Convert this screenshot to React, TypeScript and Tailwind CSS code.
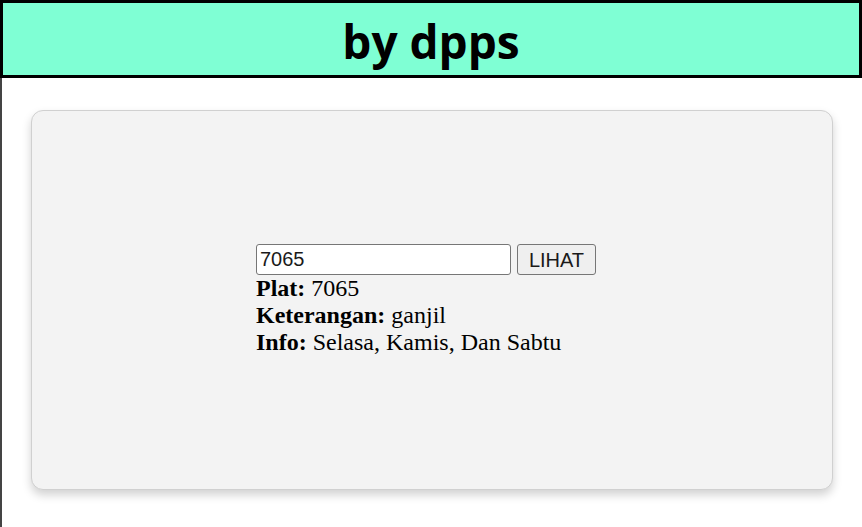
import React, { useState } from 'react';

type IInfo = {
    plat: string;
    keterangan: string;
    info: string;
};

const cekPlat = (plat: string): IInfo => {
    const last = parseInt(plat.slice(-1), 10);
    const ganjil = last % 2 === 1;
    return {
        plat,
        keterangan: ganjil ? 'ganjil' : 'genap',
        info: ganjil ? 'Selasa, Kamis, Dan Sabtu' : 'Senin, Rabu, Dan Jumat',
    };
};

function App() {
    const [query, setQuery] = useState('7065');
    const [hasil, setHasil] = useState<IInfo>(cekPlat('7065'));

    return (
        <div className="flex min-h-screen flex-col bg-white">
            <div className="flex h-[78px] items-center justify-center border-[3px] border-black bg-[#7fffd4] pt-[3px]">
                <h1
                    className="text-[46px] font-bold leading-none text-black"
                    style={{ fontFamily: '"Open Sans", sans-serif' }}
                >
                    by dpps
                </h1>
            </div>
            <div className="flex-1 border-l-2 border-[#444] pb-[37px] pl-[29px] pr-[29px] pt-8">
                <div className="flex h-[380px] items-center justify-center rounded-xl border border-[#d0d0d0] bg-[#f3f3f3] shadow-[0_5px_10px_rgba(0,0,0,0.18)]">
                    <div className="w-[352px]">
                        <div className="flex gap-[6px] font-['Liberation_Sans',sans-serif] text-[20px]">
                            <input
                                className="h-[31px] w-[255px] rounded-[3px] border border-[#767676] bg-white px-[3px] text-[#1a1a1a] outline-none"
                                value={query}
                                onChange={(e) => setQuery(e.target.value)}
                                type="text"
                            />
                            <button
                                className="h-[31px] w-[79px] rounded-[3px] border border-[#767676] bg-[#efefef] text-[#1a1a1a]"
                                onClick={() => setHasil(cekPlat(query))}
                            >
                                LIHAT
                            </button>
                        </div>
                        <div className="font-['Liberation_Serif',serif] text-[24px] leading-[27px] text-black">
                            <div>
                                <b>Plat:</b> {hasil.plat}
                            </div>
                            <div>
                                <b>Keterangan:</b> {hasil.keterangan}
                            </div>
                            <div>
                                <b>Info:</b> {hasil.info}
                            </div>
                        </div>
                    </div>
                </div>
            </div>
        </div>
    );
}

export default App;
